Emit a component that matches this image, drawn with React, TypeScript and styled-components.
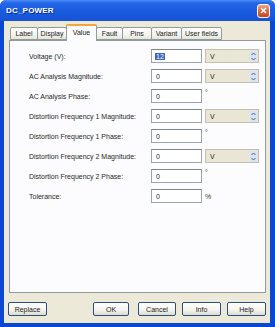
import { FC } from 'react';

import styled, { createGlobalStyle } from 'styled-components';

const GlobalStyle = createGlobalStyle`
  html, body {
    margin: 0;
    padding: 0;
    background: #ffffff;
  }
  body {
    font-family: 'Liberation Sans', Arial, sans-serif;
  }
`;

const Window = styled.div`
  width: 275px;
  height: 327px;
  box-sizing: border-box;
  display: flex;
  flex-direction: column;
  background: #0a48d4;
  border-radius: 6px 6px 0 0;
  overflow: hidden;
`;

const TitleBar = styled.div`
  height: 21px;
  flex: none;
  display: flex;
  align-items: center;
  justify-content: space-between;
  padding: 0 6px 0 6px;
  background: linear-gradient(#4a8cf6 0px, #2466e6 3px, #1a5ce0 50%, #1552d8 100%);
`;

const Title = styled.span`
  color: #ffffff;
  font-weight: bold;
  font-size: 8px;
  letter-spacing: 0.2px;
  text-shadow: 1px 1px 0 #0a2f8c;
`;

const CloseButton = styled.div`
  width: 13px;
  height: 14px;
  box-sizing: border-box;
  border: 1px solid #ffffff;
  border-radius: 3px;
  background: linear-gradient(#f0a48a, #dc6a48 45%, #c94522);
  display: flex;
  align-items: center;
  justify-content: center;
  margin-right: -1px;
`;

const Body = styled.div`
  flex: 1;
  display: flex;
  flex-direction: column;
  margin: 0 5px 4px 4px;
  padding: 3px 4px 7px 5px;
  background: #ece9d8;
`;

const TabRow = styled.div`
  height: 16px;
  display: flex;
  align-items: flex-end;
  padding-left: 1px;
  position: relative;
  z-index: 1;
`;

const Tab = styled.div<{ $active?: boolean; $w: number }>`
  width: ${(p) => p.$w}px;
  height: ${(p) => (p.$active ? 17 : 13)}px;
  box-sizing: border-box;
  display: flex;
  align-items: center;
  justify-content: center;
  font-size: 7px;
  color: #1a1a1a;
  border: 1px solid #919b9c;
  border-bottom: ${(p) => (p.$active ? 'none' : '1px solid #919b9c')};
  border-top: ${(p) => (p.$active ? '2px solid #f5a63a' : '1px solid #919b9c')};
  border-radius: 2px 2px 0 0;
  margin-right: -1px;
  margin-bottom: ${(p) => (p.$active ? -1 : 0)}px;
  padding-bottom: ${(p) => (p.$active ? 3 : 0)}px;
  background: ${(p) =>
    p.$active ? '#fcfcfe' : 'linear-gradient(#ffffff, #f3f3ef 60%, #e6e4da)'};
`;

const Panel = styled.div`
  flex: 1;
  border: 1px solid #919b9c;
  background: #fcfcfe;
  display: flex;
  flex-direction: column;
  gap: 6px;
  padding: 8px 0 0 19px;
`;

const Row = styled.div`
  height: 14px;
  display: flex;
  align-items: center;
`;

const Label = styled.div`
  width: 122px;
  font-size: 7px;
  color: #1e1e1e;
`;

const Input = styled.div<{ $selected?: boolean }>`
  width: 51px;
  height: 14px;
  box-sizing: border-box;
  border: 1px solid #9aa4ac;
  border-top-color: #7c858c;
  background: #ffffff;
  font-size: 7px;
  color: #1e1e1e;
  display: flex;
  align-items: center;
  padding-left: 3px;

  span {
    background: ${(p) => (p.$selected ? '#3a66c4' : 'transparent')};
    color: ${(p) => (p.$selected ? '#ffffff' : '#1e1e1e')};
    padding: 0 1px;
  }
`;

const Select = styled.div`
  width: 54px;
  height: 14px;
  margin-left: 3px;
  box-sizing: border-box;
  border: 1px solid #c4c0ae;
  background: #e9e6d6;
  display: flex;
  align-items: center;
  justify-content: space-between;
  padding: 0 1px 0 4px;
  font-size: 7px;
  color: #1e1e1e;
`;

const Unit = styled.span<{ $raised?: boolean }>`
  margin-left: 3px;
  font-size: 7px;
  color: #333333;
  align-self: ${(p) => (p.$raised ? 'flex-start' : 'center')};
`;

const Footer = styled.div`
  display: flex;
  align-items: center;
  margin-top: 9px;
  padding-left: 0;
  margin-left: -1px;
`;

const Button = styled.div<{ $w: number; $gap?: number }>`
  width: ${(p) => p.$w}px;
  height: 14px;
  box-sizing: border-box;
  margin-left: ${(p) => p.$gap ?? 0}px;
  border: 1px solid #2b4e86;
  border-radius: 2px;
  background: linear-gradient(#ffffff, #f4f3ee 60%, #dedbcb);
  display: flex;
  align-items: center;
  justify-content: center;
  font-size: 7px;
  color: #1a1a1a;
`;

const Spinner: FC = () => (
  <svg width="7" height="11" viewBox="0 0 7 11">
    <rect x="0" y="0" width="7" height="11" rx="1" fill="#d6e2f7" />
    <path d="M1.5 4 L3.5 2 L5.5 4" stroke="#4d6185" strokeWidth="1" fill="none" />
    <path d="M1.5 7 L3.5 9 L5.5 7" stroke="#4d6185" strokeWidth="1" fill="none" />
  </svg>
);

type Field = {
  label: string;
  value: string;
  unit: 'select' | 'deg' | 'pct';
  selected?: boolean;
};

const fields: Field[] = [
  { label: 'Voltage (V):', value: '12', unit: 'select', selected: true },
  { label: 'AC Analysis Magnitude:', value: '0', unit: 'select' },
  { label: 'AC Analysis Phase:', value: '0', unit: 'deg' },
  { label: 'Distortion Frequency 1 Magnitude:', value: '0', unit: 'select' },
  { label: 'Distortion Frequency 1 Phase:', value: '0', unit: 'deg' },
  { label: 'Distortion Frequency 2 Magnitude:', value: '0', unit: 'select' },
  { label: 'Distortion Frequency 2 Phase:', value: '0', unit: 'deg' },
  { label: 'Tolerance:', value: '0', unit: 'pct' },
];

const tabs = [
  { name: 'Label', w: 28 },
  { name: 'Display', w: 30 },
  { name: 'Value', w: 31, active: true },
  { name: 'Fault', w: 27 },
  { name: 'Pins', w: 30 },
  { name: 'Variant', w: 31 },
  { name: 'User fields', w: 41 },
];

const App: FC = () => {
  return (
    <>
      <GlobalStyle />
      <Window>
        <TitleBar>
          <Title>DC_POWER</Title>
          <CloseButton>
            <svg width="7" height="7" viewBox="0 0 7 7">
              <path d="M1 1 L6 6 M6 1 L1 6" stroke="#ffffff" strokeWidth="1.6" />
            </svg>
          </CloseButton>
        </TitleBar>
        <Body>
          <TabRow>
            {tabs.map((t) => (
              <Tab key={t.name} $active={t.active} $w={t.w}>
                {t.name}
              </Tab>
            ))}
          </TabRow>
          <Panel>
            {fields.map((f) => (
              <Row key={f.label}>
                <Label>{f.label}</Label>
                <Input $selected={f.selected}>
                  <span>{f.value}</span>
                </Input>
                {f.unit === 'select' && (
                  <Select>
                    V
                    <Spinner />
                  </Select>
                )}
                {f.unit === 'deg' && <Unit $raised>°</Unit>}
                {f.unit === 'pct' && <Unit>%</Unit>}
              </Row>
            ))}
          </Panel>
          <Footer>
            <Button $w={39}>Replace</Button>
            <Button $w={36} $gap={46}>
              OK
            </Button>
            <Button $w={38} $gap={9}>
              Cancel
            </Button>
            <Button $w={39} $gap={6}>
              Info
            </Button>
            <Button $w={39} $gap={6}>
              Help
            </Button>
          </Footer>
        </Body>
      </Window>
    </>
  );
};

export default App;
